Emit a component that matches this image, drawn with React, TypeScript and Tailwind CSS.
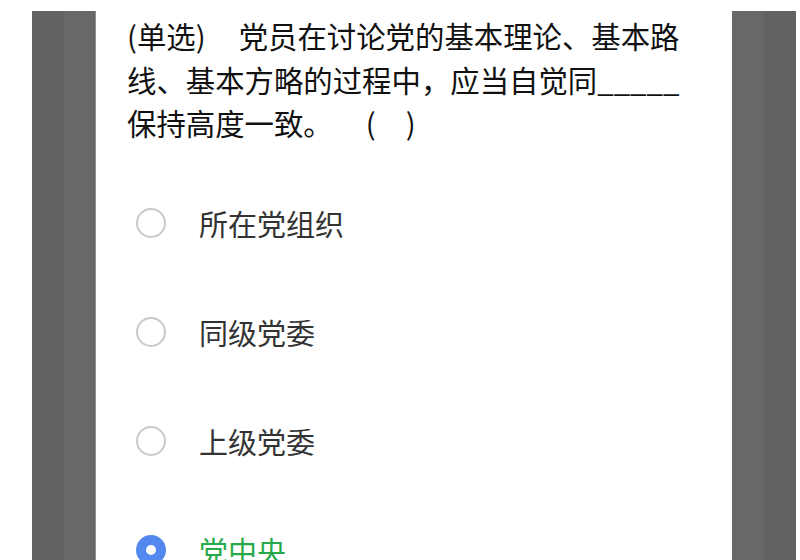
import React from 'react';

const font = { fontFamily: '"Noto Sans CJK SC", "Noto Sans", sans-serif' };

const options = [
  { label: '所在党组织', checked: false },
  { label: '同级党委', checked: false },
  { label: '上级党委', checked: false },
  { label: '党中央', checked: true },
];

const Radio: React.FC<{ checked: boolean }> = ({ checked }) =>
  checked ? (
    <span className="box-border block h-[30px] w-[30px] shrink-0 rounded-full border-[10px] border-[#5388ee] bg-white" />
  ) : (
    <span className="box-border block h-[30px] w-[30px] shrink-0 rounded-full border-2 border-[#c9c9c9] bg-white" />
  );

const App: React.FC = () => {
  return (
    <div className="flex h-[560px] w-[800px] overflow-hidden bg-white pt-[11px]" style={font}>
      <div className="w-[32px] shrink-0 bg-white" />
      <div className="w-[32px] shrink-0 bg-[#626262]" />
      <div className="w-[31px] shrink-0 bg-[#686868]" />
      <div className="w-px shrink-0 bg-[#8e8e8e]" />

      <main className="-mt-[11px] flex w-[636px] shrink-0 flex-col bg-white pl-[31px] pt-[14px]">
        <p className="text-[29.4px] leading-[43.5px] text-[#111111] whitespace-nowrap">
          (单选)<span className="inline-block w-[33px]" />党员在讨论党的基本理论、基本路
          <br />
          线、基本方略的过程中，应当自觉同_____
          <br />
          保持高度一致。<span className="inline-block w-[33px]" />(<span className="inline-block w-[30px]" />)
        </p>

        <ul className="mt-[24px] flex flex-col">
          {options.map((o) => (
            <li key={o.label} className="flex h-[109px] items-center pl-[9px]">
              <Radio checked={o.checked} />
              <span
                className={`ml-[33px] text-[29px] leading-none ${o.checked ? 'text-[#27a94b]' : 'text-[#333333]'}`}
              >
                {o.label}
              </span>
            </li>
          ))}
        </ul>
      </main>

      <div className="w-[32px] shrink-0 bg-[#686868]" />
      <div className="w-[32px] shrink-0 bg-[#626262]" />
      <div className="w-[4px] shrink-0 bg-white" />
    </div>
  );
};

export default App;
